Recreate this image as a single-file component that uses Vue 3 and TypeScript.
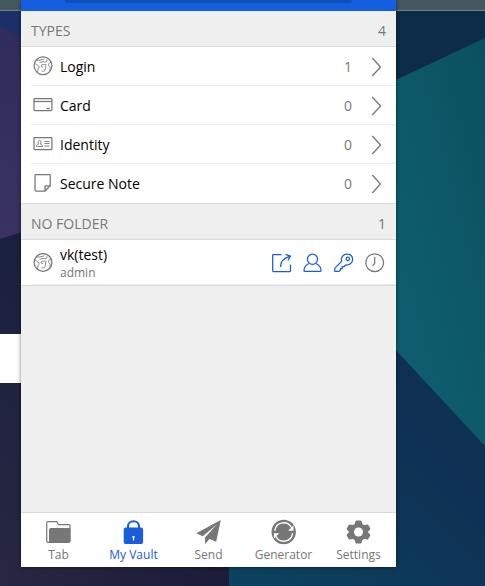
<script setup lang="ts">
interface VaultType {
  icon: string
  label: string
  count: number
}

interface TabItem {
  icon: string
  label: string
  active?: boolean
}

const types: VaultType[] = [
  { icon: 'globe', label: 'Login', count: 1 },
  { icon: 'card', label: 'Card', count: 0 },
  { icon: 'identity', label: 'Identity', count: 0 },
  { icon: 'note', label: 'Secure Note', count: 0 },
]

const actions: string[] = ['share', 'user', 'key', 'clock']

const tabs: TabItem[] = [
  { icon: 'folder', label: 'Tab' },
  { icon: 'lock', label: 'My Vault', active: true },
  { icon: 'send', label: 'Send' },
  { icon: 'generator', label: 'Generator' },
  { icon: 'settings', label: 'Settings' },
]

const globePaths: string[] = [
  'M3.4 4.2 C5 3.4 6 4.6 7.4 3.6 C9 3 9.8 3.8 11 2.6 M6 6 C8 6.4 9 5 11.4 5.6 C13 5.8 13.6 4.8 13.4 3.2',
  'M1 7.2 C2.8 7.2 3 8.8 4.8 9.2 C6.2 9.8 5.4 11.8 4.6 12.6 C4 13.4 4.6 14.6 3.8 15.8',
  'M7.6 9 C9 7.8 10.6 8.4 12.2 8 C13 8.6 11.8 9.6 12 11 C12.2 12.4 11.4 12.8 11.4 14.2 C10.6 15 9.4 14.8 8.2 15 M7.6 9 C7.4 10.2 8.4 10.6 9.4 10.6',
  'M17.6 5.6 C15.8 6.2 14.6 8 15.2 9.4 C15.6 10.8 17 10.4 16.8 12 C16.6 13.4 15.6 14.4 16.2 15.4',
]
</script>

<template>
  <div class="page">
    <svg class="backdrop" width="485" height="586" viewBox="0 0 485 586">
      <defs>
        <linearGradient id="teal" x1="1" y1="0" x2="0" y2="1">
          <stop offset="0" stop-color="#0b5060" />
          <stop offset="0.5" stop-color="#0d5a6b" />
          <stop offset="1" stop-color="#105f70" />
        </linearGradient>
        <linearGradient id="sea" x1="1" y1="0" x2="0" y2="1">
          <stop offset="0.1" stop-color="#0e2f53" />
          <stop offset="0.45" stop-color="#0e3355" />
          <stop offset="1" stop-color="#0c4361" />
        </linearGradient>
        <linearGradient id="violet" x1="0" y1="0" x2="0" y2="1">
          <stop offset="0" stop-color="#302c5b" />
          <stop offset="1" stop-color="#3a3361" />
        </linearGradient>
        <linearGradient id="night" x1="0" y1="0" x2="0" y2="1">
          <stop offset="0" stop-color="#1a2040" />
          <stop offset="1" stop-color="#272741" />
        </linearGradient>
        <linearGradient id="floor" x1="0" y1="0" x2="1" y2="0">
          <stop offset="0" stop-color="#272741" />
          <stop offset="1" stop-color="#1b1b3a" />
        </linearGradient>
      </defs>
      <rect width="485" height="586" fill="#0d2c49" />
      <path d="M0 0H60V60H0z" fill="#1d2f68" />
      <path d="M0 27L60 58V222L0 239z" fill="url(#violet)" />
      <path d="M0 239L60 220V586H0z" fill="url(#night)" />
      <path d="M0 560H229V586H0z" fill="url(#floor)" />
      <path d="M229 586V330H380L485 446V586z" fill="url(#sea)" />
      <path d="M380 87.500L485 38V446L380 333z" fill="url(#teal)" />
      <path d="M0 0H485V9H0z" fill="#455860" />
      <path d="M0 9H485V10H0z" fill="#4b5c63" />
      <path d="M0 10H485V11H0z" fill="#6d8084" />
      <path d="M0 334H40V383H0z" fill="#fff" />
    </svg>

    <main class="popup">
      <header class="topbar"><div class="search"></div></header>

      <div class="content">
        <section>
          <h2 class="heading"><span>TYPES</span><span>4</span></h2>
          <div class="list">
            <div v-for="t in types" :key="t.label" class="row">
              <svg class="icon" width="20" height="20" viewBox="0 0 20 20">
                <g v-if="t.icon === 'globe'">
                  <circle cx="10" cy="9.800" r="8.900" />
                  <path v-for="d in globePaths" :key="d" :d="d" class="thin" transform="translate(0.500 0.300)" />
                </g>
                <g v-else-if="t.icon === 'card'">
                  <rect x="1" y="3.500" width="17.900" height="12" rx="0.800" />
                  <path d="M1 6.500H18.900" />
                  <path d="M13.400 13.500H16.800" />
                </g>
                <g v-else-if="t.icon === 'identity'">
                  <rect x="1" y="3.500" width="17.900" height="12" rx="0.800" />
                  <path class="thin" d="M3.400 12.500C3.400 11 4.600 10.500 5.600 10.100C4.700 8.800 4.800 6.300 6.500 6.300S8.300 8.800 7.400 10.100C8.400 10.500 9.600 11 9.600 12.500z" />
                  <path d="M11.400 7.500H16.400M11.400 9.500H16.400M11.400 12H16.400" class="thin" />
                </g>
                <g v-else>
                  <path d="M2.400 1.500H16.400Q17.200 1.500 17.200 2.300V12.800L12 18H3Q2 18 2 17V2.300Q2 1.500 2.800 1.500" />
                  <path d="M12 18V13.600Q12 12.800 12.800 12.800H17.200" />
                </g>
              </svg>
              <span class="label">{{ t.label }}</span>
              <span class="count">{{ t.count }}</span>
              <svg class="chevron" width="11" height="20" viewBox="0 0 11 20">
                <path d="M1.300 1L9.500 10L1.300 19" />
              </svg>
            </div>
          </div>
        </section>

        <section>
          <h2 class="heading"><span>NO FOLDER</span><span>1</span></h2>
          <div class="list">
            <div class="row item">
              <svg class="icon" width="20" height="20" viewBox="0 0 20 20">
                <circle cx="10" cy="9.500" r="8.900" />
                <path v-for="d in globePaths" :key="d" :d="d" class="thin" transform="translate(0.500 0)" />
              </svg>
              <div class="label">
                <div class="name">vk(test)</div>
                <div class="sub">admin</div>
              </div>
              <div class="actions">
                <svg v-for="a in actions" :key="a" :class="['action', a]" width="20" height="20" viewBox="0 0 20 20">
                  <g v-if="a === 'share'">
                    <path d="M9.500 1.500H1.500Q0.700 1.500 0.700 2.300V17.700Q0.700 18.500 1.500 18.500H17.700Q18.500 18.500 18.500 17.700V11.500" />
                    <path d="M8.500 14C8.500 8.500 11 5 18 3.300M13.500 1.300L18.500 3.200L15.800 7.500" />
                  </g>
                  <g v-else-if="a === 'user'">
                    <circle cx="9.500" cy="6.300" r="5.100" />
                    <path d="M6 10.500C2.600 12.200 1 14.600 1 17.500Q1 18.400 2 18.400H17Q18 18.400 18 17.500C18 14.600 16.400 12.200 13 10.500" />
                  </g>
                  <g v-else-if="a === 'key'">
                    <path d="M7.600 8.400C6.700 4.700 8.900 1.200 13 1.200C16.600 1.200 18.600 3.600 18.600 6.600C18.600 10 15.400 12.600 11.600 12L9.900 13.700H8.200V15.500H6.400V17.200L5 18.400H1.200Q0.700 18.400 0.700 17.800V15.400z" />
                    <circle cx="13.800" cy="5.800" r="1.700" />
                  </g>
                  <g v-else>
                    <circle cx="9.700" cy="9.700" r="8.900" />
                    <path d="M9.700 4V10.300L7.500 12.800" />
                  </g>
                </svg>
              </div>
            </div>
          </div>
        </section>
      </div>

      <nav class="tabs">
        <a v-for="t in tabs" :key="t.label" :class="['tab', { active: t.active }]">
          <svg width="26" height="26" viewBox="0.500 0 26 26">
            <g v-if="t.icon === 'folder'">
              <path class="line" d="M3 23.400C1.500 23.400 1.200 22.700 1.200 21.500V4.300Q1.200 2.700 2.800 2.700H10.500Q11.500 2.700 12 3.800L12.800 5.600H23Q24.500 5.600 24.500 7V21.500Q24.500 23.300 23 23.400z" />
              <path d="M5.200 9H23.300Q24.900 9 24.900 10.500V22Q24.900 23.700 23.300 23.700H3.500V10.500Q3.700 9 5.200 9z" />
            </g>
            <g v-else-if="t.icon === 'lock'">
              <path class="shackle" d="M7.500 10V7.300C7.500 0.500 18.500 0.500 18.500 7.300V10" />
              <rect x="3.200" y="8.500" width="19.400" height="16.500" rx="2" />
              <path class="hole" d="M13 17V21.500M11.500 18H14.500" />
            </g>
            <g v-else-if="t.icon === 'send'">
              <path d="M25.300 0.900L0.800 14.200L7.200 17.300L21.300 5.500L9.500 18.500V24.900L14 20L20.700 22.700z" />
            </g>
            <g v-else-if="t.icon === 'generator'">
              <circle cx="13.200" cy="13" r="12.200" />
              <path class="arrow" d="M4.300 11.800C5.600 2.200 17.400 1.200 21.300 9M22.100 14.200C20.800 23.800 9 24.800 5.100 17" />
              <path class="cut" d="M23 6.500V11.700H17.600zM3.400 19.500V14.300H8.800z" />
            </g>
            <g v-else>
              <path class="gear" d="M11.200 2.700H14.800L15.800 6L18.400 7.500L21.700 6.700L23.500 9.900L21.200 12.300V13.700L23.500 16.100L21.700 19.300L18.400 18.500L15.800 20L14.800 23.300H11.200L10.200 20L7.600 18.500L4.300 19.300L2.500 16.100L4.800 13.700V12.300L2.500 9.900L4.300 6.700L7.600 7.500L10.200 6z" />
              <circle class="cut" cx="13" cy="13" r="4.500" />
            </g>
          </svg>
          <span>{{ t.label }}</span>
        </a>
      </nav>
    </main>
  </div>
</template>

<style>
body {
  overflow: hidden;
}
</style>

<style scoped>
.page {
  position: relative;
  width: 485px;
  height: 586px;
  overflow: hidden;
  font-family: "Open Sans", sans-serif;
  font-size: 14px;
  line-height: 20px;
}
.backdrop {
  position: absolute;
  inset: 0;
}
.popup {
  position: relative;
  display: flex;
  flex-direction: column;
  width: 375px;
  height: 567px;
  margin-left: 21px;
  background: #efefef;
  color: #000;
  box-shadow: 0 0 4px rgba(0, 0, 0, 0.5);
}
.topbar {
  height: 11px;
  flex: none;
  background: #145fdf;
}
.search {
  height: 3px;
  margin: 0 44px;
  border-radius: 0 0 4px 4px;
  background: #0f4fb8;
}
.content {
  flex: 1;
}
.heading {
  display: flex;
  justify-content: space-between;
  height: 35px;
  box-sizing: border-box;
  margin: 0;
  padding: 10px 10px 5px;
  font-size: 14px;
  font-weight: 400;
  color: #777;
}
.list {
  background: #fff;
  border-top: 1px solid #dadada;
  border-bottom: 1px solid #dadada;
}
.row {
  display: flex;
  align-items: center;
  box-sizing: border-box;
  height: 39px;
  margin-left: 10px;
  padding: 1px 14px 0 2px;
  border-bottom: 1px solid #ececec;
}
.row:last-child:not(.item) {
  border-bottom-color: #fff;
}
.row.item {
  height: 45px;
  padding: 2px 10px 0 2px;
}
.icon,
.chevron,
.action {
  flex: none;
  fill: none;
  stroke: #777;
  stroke-width: 1.25;
  stroke-linejoin: round;
}
.icon {
  margin-top: -1px;
}
.thin {
  stroke-width: 0.9;
}
.label {
  flex: 1;
  margin-left: 7px;
}
.count {
  color: #777;
  margin-right: 19px;
}
.name {
  line-height: 18px;
}
.sub {
  font-size: 12px;
  line-height: 17px;
  color: #777;
}
.actions {
  display: flex;
  gap: 11px;
  margin-right: 1px;
}
.action {
  stroke: #175ddc;
}
.action.clock {
  stroke: #777;
}
.tabs {
  display: flex;
  flex: none;
  height: 54px;
  background: #fff;
  border-top: 1px solid #dadada;
}
.tab {
  flex: 1;
  display: flex;
  flex-direction: column;
  align-items: center;
  padding-top: 6px;
  font-size: 12px;
  line-height: 20px;
  color: #777;
  fill: #777;
}
.tab.active {
  color: #175ddc;
  fill: #175ddc;
}
.line {
  fill: none;
  stroke: #777;
  stroke-width: 1.2;
}
.shackle {
  fill: none;
  stroke: #175ddc;
  stroke-width: 2;
}
.hole {
  stroke: #fff;
  stroke-width: 1.2;
}
.arrow {
  fill: none;
  stroke: #fff;
  stroke-width: 1.4;
}
.cut {
  fill: #fff;
}
.gear {
  stroke: #777;
  stroke-width: 2.6;
  stroke-linejoin: round;
}
</style>
